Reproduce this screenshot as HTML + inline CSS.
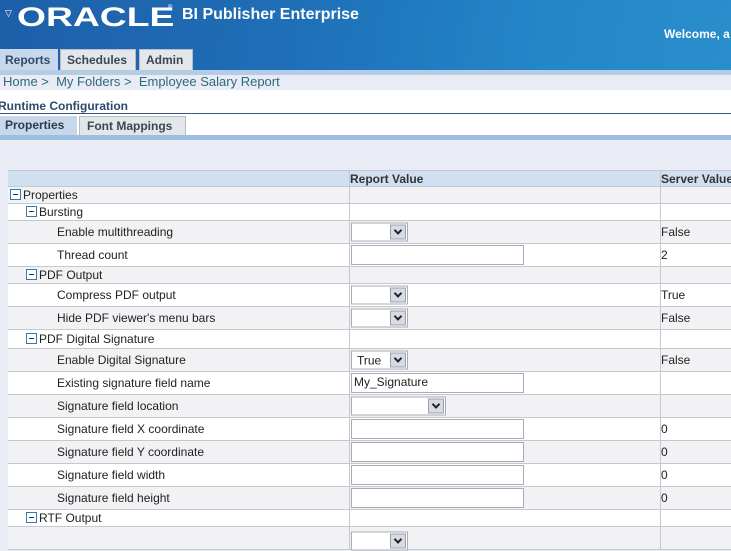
<!DOCTYPE html>
<html><head><style>
*{margin:0;padding:0;box-sizing:border-box}
body{width:731px;height:532px;overflow:hidden;background:#e9ecf4;font-family:"Liberation Sans",sans-serif;font-size:12px;color:#222;position:relative}
.abs{position:absolute;white-space:nowrap}
#hdr{left:0;top:0;width:731px;height:70px;background:linear-gradient(100deg,#1d5fa8 0%,#1f6fb8 40%,#2387c8 75%,#2a8ecc 100%)}
.tab{position:absolute;top:49px;height:21px;background:#e3e6ea;border:1px solid #b8bcc4;border-bottom:none;font-weight:bold;font-size:12px;color:#3c4650;padding:3px 6px;white-space:nowrap}
.row{position:absolute;left:8px;width:723px;border-bottom:1px solid #c4c8d0}
.row span{position:absolute;top:50%;transform:translateY(-50%);font-size:12px;color:#222;white-space:nowrap}
.g{background:#f2f2f4}.w{background:#fff}
.col{position:absolute;top:0;bottom:0;width:1px;background:#c4c8d0}
.mn{display:inline-block;width:11px;height:11px;border:1px solid #3c78b0;background:#fff;position:relative;vertical-align:-1px;margin-right:2px}
.mn:after{content:"";position:absolute;left:2px;top:4px;width:5px;height:1px;background:#234}
.sel{position:absolute;height:19px;border:1px solid #a8acb4;background:#fff;top:50%;transform:translateY(-50%)}
.sel b{position:absolute;right:1px;top:1px;width:16px;height:15px;background:#d8dae4;border:1px solid #9aa0b0}
.sel b:after{content:"";position:absolute;left:4px;top:2px;width:4px;height:4px;border-right:2px solid #222;border-bottom:2px solid #222;transform:rotate(45deg)}
.inp{position:absolute;left:343px;width:173px;height:20px;border:1px solid #a8acb4;background:#fff;top:50%;transform:translateY(-50%);font-size:12px;padding:1px 2px}
</style></head><body>
<div id="hdr" class="abs"></div>
<div class="abs" style="left:5px;top:8px;color:#fff;font-size:9px">▽</div>
<div class="abs" style="left:17px;top:3px;color:#fff;font-family:'Liberation Sans',sans-serif;font-weight:bold;font-size:27px;line-height:28px;transform:scaleX(1.38);transform-origin:left">ORACLE</div>
<div class="abs" style="left:168px;top:5px;color:#fff;font-size:6px">®</div>
<div class="abs" style="left:182px;top:6px;color:#fff;font-size:16px;font-weight:bold">BI Publisher Enterprise</div>
<div class="abs" style="left:664px;top:27px;color:#fff;font-weight:bold;font-size:12px">Welcome, a</div>
<div class="abs" style="left:0;top:70px;width:731px;height:5px;background:#b4cce4"></div>
<div class="abs" style="left:0;top:75px;width:731px;height:15px;background:#e9ecf4"></div>
<div class="tab" style="left:-2px;width:60px;background:#c8d8ec;border-color:#c8d8ec;color:#2e4a6a">Reports</div>
<div class="tab" style="left:60px;width:76px">Schedules</div>
<div class="tab" style="left:139px;width:54px">Admin</div>
<div class="abs" style="left:3px;top:74px;color:#2c6a7e;font-size:13px">Home &gt; &nbsp;My Folders &gt; &nbsp;Employee Salary Report</div>
<div class="abs" style="left:0;top:90px;width:731px;height:45px;background:#fff"></div>
<div class="abs" style="left:-2px;top:99px;color:#2e4a6a;font-weight:bold;font-size:12px">Runtime Configuration</div>
<div class="abs" style="left:0;top:113px;width:731px;height:1px;background:#3c5480"></div>
<div class="abs" style="left:0;top:116px;width:77px;height:19px;background:#c8d8ec;font-weight:bold;color:#2e3a46;padding:2px 5px">Properties</div>
<div class="abs" style="left:79px;top:116px;width:107px;height:19px;background:#e3e6ea;border:1px solid #b8bcc4;border-bottom:none;font-weight:bold;color:#3c4650;padding:2px 7px">Font Mappings</div>
<div class="abs" style="left:0;top:135px;width:731px;height:5px;background:#9cbce0"></div>

<div class="row" style="top:170px;height:17px;background:#d0e0f0;border-top:1px solid #c4c8d0"><span style="left:342px;font-weight:bold;color:#333">Report Value</span><span style="left:653px;font-weight:bold;color:#333">Server Value</span><div class="col" style="left:341px"></div><div class="col" style="left:652px"></div></div>

<div class="row g" style="top:187px;height:17px"><span style="left:2px"><i class="mn"></i>Properties</span><div class="col" style="left:341px"></div><div class="col" style="left:652px"></div></div>
<div class="row w" style="top:204px;height:17px"><span style="left:18px"><i class="mn"></i>Bursting</span><div class="col" style="left:341px"></div><div class="col" style="left:652px"></div></div>
<div class="row g" style="top:221px;height:23px"><span style="left:49px">Enable multithreading</span><div class="sel" style="left:343px;width:57px"><b></b></div><span style="left:653px">False</span><div class="col" style="left:341px"></div><div class="col" style="left:652px"></div></div>
<div class="row w" style="top:244px;height:23px"><span style="left:49px">Thread count</span><div class="inp"></div><span style="left:653px">2</span><div class="col" style="left:341px"></div><div class="col" style="left:652px"></div></div>
<div class="row g" style="top:267px;height:17px"><span style="left:18px"><i class="mn"></i>PDF Output</span><div class="col" style="left:341px"></div><div class="col" style="left:652px"></div></div>
<div class="row w" style="top:284px;height:23px"><span style="left:49px">Compress PDF output</span><div class="sel" style="left:343px;width:57px"><b></b></div><span style="left:653px">True</span><div class="col" style="left:341px"></div><div class="col" style="left:652px"></div></div>
<div class="row g" style="top:307px;height:23px"><span style="left:49px">Hide PDF viewer's menu bars</span><div class="sel" style="left:343px;width:57px"><b></b></div><span style="left:653px">False</span><div class="col" style="left:341px"></div><div class="col" style="left:652px"></div></div>
<div class="row w" style="top:330px;height:19px"><span style="left:18px"><i class="mn"></i>PDF Digital Signature</span><div class="col" style="left:341px"></div><div class="col" style="left:652px"></div></div>
<div class="row g" style="top:349px;height:23px"><span style="left:49px">Enable Digital Signature</span><div class="sel" style="left:343px;width:57px"><b></b><span style="left:5px">True</span></div><span style="left:653px">False</span><div class="col" style="left:341px"></div><div class="col" style="left:652px"></div></div>
<div class="row w" style="top:372px;height:23px"><span style="left:49px">Existing signature field name</span><div class="inp">My_Signature</div><div class="col" style="left:341px"></div><div class="col" style="left:652px"></div></div>
<div class="row g" style="top:395px;height:23px"><span style="left:49px">Signature field location</span><div class="sel" style="left:343px;width:95px"><b></b></div><div class="col" style="left:341px"></div><div class="col" style="left:652px"></div></div>
<div class="row w" style="top:418px;height:23px"><span style="left:49px">Signature field X coordinate</span><div class="inp"></div><span style="left:653px">0</span><div class="col" style="left:341px"></div><div class="col" style="left:652px"></div></div>
<div class="row g" style="top:441px;height:23px"><span style="left:49px">Signature field Y coordinate</span><div class="inp"></div><span style="left:653px">0</span><div class="col" style="left:341px"></div><div class="col" style="left:652px"></div></div>
<div class="row w" style="top:464px;height:23px"><span style="left:49px">Signature field width</span><div class="inp"></div><span style="left:653px">0</span><div class="col" style="left:341px"></div><div class="col" style="left:652px"></div></div>
<div class="row g" style="top:487px;height:23px"><span style="left:49px">Signature field height</span><div class="inp"></div><span style="left:653px">0</span><div class="col" style="left:341px"></div><div class="col" style="left:652px"></div></div>
<div class="row w" style="top:510px;height:17px"><span style="left:18px"><i class="mn"></i>RTF Output</span><div class="col" style="left:341px"></div><div class="col" style="left:652px"></div></div>
<div class="row g" style="top:527px;height:23px"><div class="sel" style="left:343px;width:57px;top:14px"><b></b></div><div class="col" style="left:341px"></div><div class="col" style="left:652px"></div></div>
</body></html>
